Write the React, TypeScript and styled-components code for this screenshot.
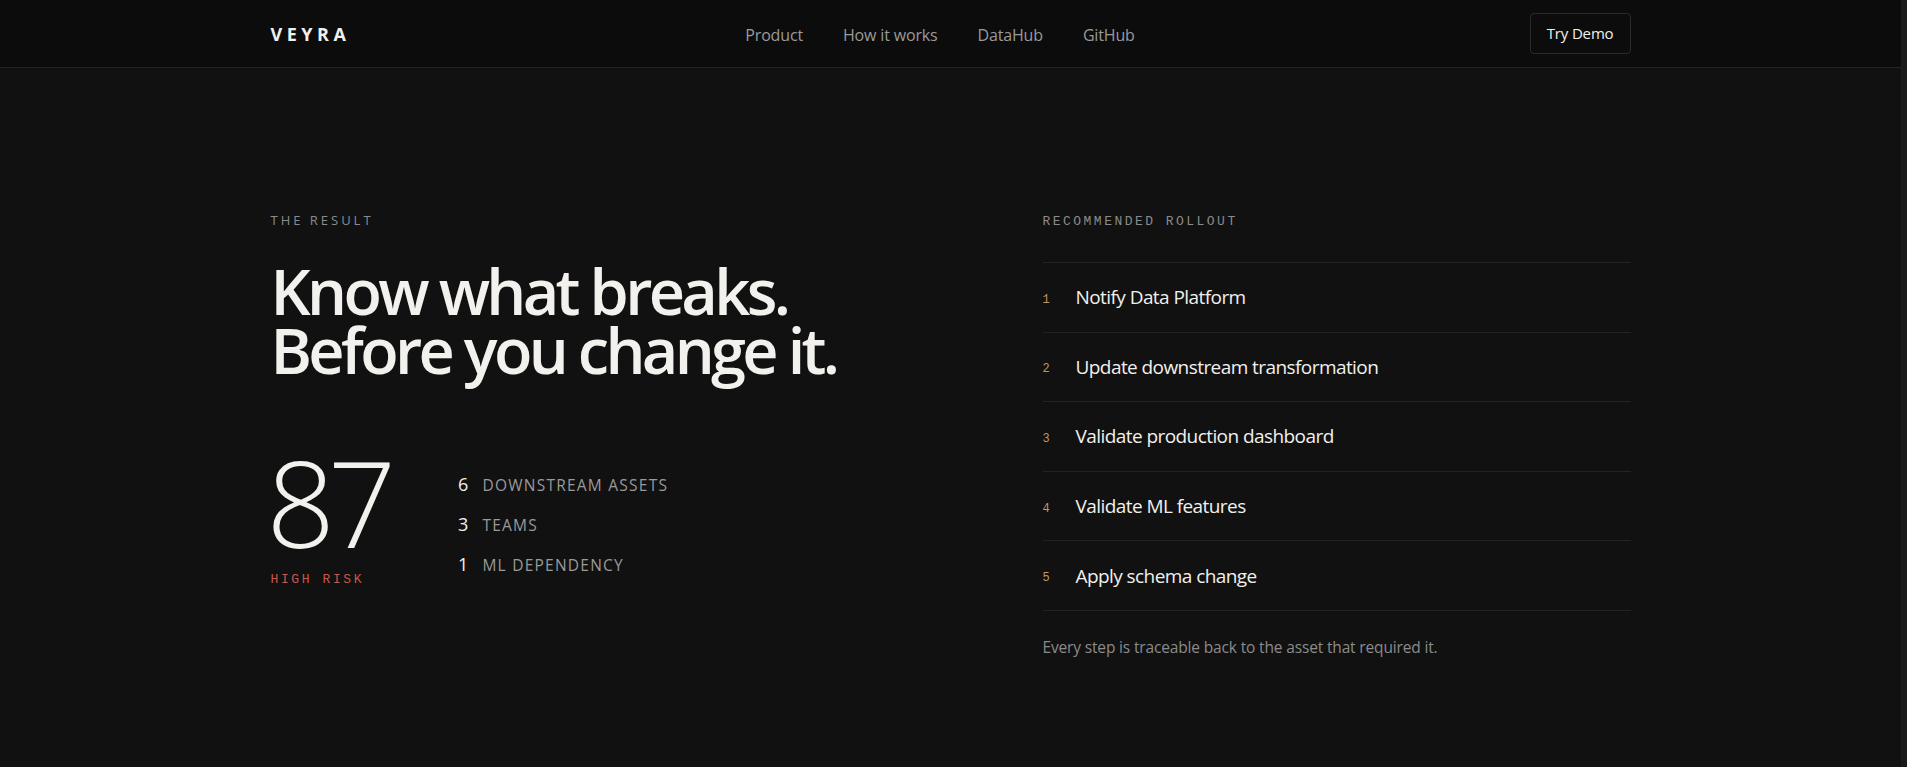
import styled, { createGlobalStyle } from 'styled-components';

const GlobalStyle = createGlobalStyle`
  html {
    background: #1a1a1a;
  }

  body {
    margin: 0 6px 0 0;
    background: #111111;
    color: #f1f0ec;
    font-family: "Open Sans", "Noto Sans", sans-serif;
    -webkit-font-smoothing: antialiased;
  }

  * {
    box-sizing: border-box;
  }
`;

const mono = `"Liberation Mono", "DejaVu Sans Mono", monospace`;

const Page = styled.div`
  min-height: 1400px;
`;

const Header = styled.header`
  background: #0c0c0c;
  border-bottom: 1px solid #232323;
`;

const HeaderInner = styled.div`
  max-width: 1360px;
  height: 67px;
  margin: 0 auto;
  display: flex;
  align-items: center;
  justify-content: space-between;
`;

const Logo = styled.div`
  font-size: 18px;
  font-weight: 700;
  letter-spacing: 0.25em;
  color: #f1f0ec;
`;

const Nav = styled.nav`
  display: flex;
  gap: 40px;
  padding-top: 2px;

  a {
    color: #9a9a9a;
    text-decoration: none;
    font-size: 16px;
    letter-spacing: -0.01em;
  }
`;

const DemoButton = styled.button`
  height: 41px;
  margin-top: -1px;
  padding: 0 16px;
  background: transparent;
  border: 1px solid #2b2b2b;
  border-radius: 4px;
  color: #f1f0ec;
  font-family: inherit;
  font-size: 15px;
  letter-spacing: -0.01em;
  cursor: pointer;
`;

const Main = styled.main`
  max-width: 1360px;
  margin: 0 auto;
  padding-top: 145px;
  display: grid;
  grid-template-columns: minmax(0, 1fr) 588px;
`;

const Column = styled.section`
  display: flex;
  flex-direction: column;
`;

const Eyebrow = styled.div<{ $mono?: boolean }>`
  font-family: ${(p) => (p.$mono ? mono : 'inherit')};
  font-size: 13px;
  line-height: 18px;
  letter-spacing: ${(p) => (p.$mono ? '0.19em' : '0.23em')};
  color: #8b8b8b;
  text-transform: uppercase;
  margin-top: ${(p) => (p.$mono ? '0' : '-2px')};
`;

const Headline = styled.h1`
  margin: 32px 0 0;
  font-size: 63px;
  line-height: 59px;
  font-weight: 600;
  letter-spacing: -0.058em;
  color: #f2f1ed;
`;

const ScoreRow = styled.div`
  margin-top: 68px;
  display: flex;
  align-items: center;
  gap: 69px;
`;

const Score = styled.div`
  display: flex;
  flex-direction: column;
`;

const ScoreValue = styled.div`
  font-size: 120px;
  line-height: 110px;
  font-weight: 300;
  letter-spacing: -0.06em;
  color: #f2f1ed;
  margin-left: -4px;
`;

const RiskLabel = styled.div`
  margin-top: 15px;
  font-family: ${mono};
  font-size: 13px;
  letter-spacing: 0.2em;
  color: #c8574f;
`;

const Stats = styled.ul`
  list-style: none;
  margin: 0;
  padding: 13px 0 0;
  display: flex;
  flex-direction: column;
  gap: 16px;
`;

const Stat = styled.li`
  display: flex;
  align-items: baseline;
  gap: 14px;
  height: 24px;
  line-height: 24px;
`;

const StatNum = styled.span`
  font-size: 18px;
  color: #f1f0ec;
`;

const StatLabel = styled.span`
  font-size: 15.5px;
  letter-spacing: 0.08em;
  color: #9a9a9a;
  text-transform: uppercase;
`;

const Steps = styled.ol`
  list-style: none;
  margin: 31px 0 0;
  padding: 0;
  border-top: 1px solid #232323;
`;

const Step = styled.li`
  height: 69.6px;
  display: flex;
  align-items: center;
  border-bottom: 1px solid #232323;
`;

const StepNum = styled.span`
  width: 33px;
  padding-top: 5px;
  font-family: ${mono};
  font-size: 12px;
  color: #bd9866;
`;

const StepText = styled.span`
  font-size: 19px;
  letter-spacing: -0.03em;
  color: #f1f0ec;
`;

const Footnote = styled.p`
  margin: 25px 0 0;
  font-size: 15.5px;
  letter-spacing: -0.01em;
  color: #8b8b8b;
`;

const stats = [
  { n: 6, label: 'Downstream assets' },
  { n: 3, label: 'Teams' },
  { n: 1, label: 'ML dependency' },
];

const steps = [
  'Notify Data Platform',
  'Update downstream transformation',
  'Validate production dashboard',
  'Validate ML features',
  'Apply schema change',
];

const App = () => {
  return (
    <Page>
      <GlobalStyle />
      <Header>
        <HeaderInner>
          <Logo>VEYRA</Logo>
          <Nav>
            <a href="#product">Product</a>
            <a href="#how">How it works</a>
            <a href="#datahub">DataHub</a>
            <a href="#github">GitHub</a>
          </Nav>
          <DemoButton>Try Demo</DemoButton>
        </HeaderInner>
      </Header>
      <Main>
        <Column>
          <Eyebrow>The result</Eyebrow>
          <Headline>
            Know what breaks.
            <br />
            Before you change it.
          </Headline>
          <ScoreRow>
            <Score>
              <ScoreValue>87</ScoreValue>
              <RiskLabel>HIGH RISK</RiskLabel>
            </Score>
            <Stats>
              {stats.map((s) => (
                <Stat key={s.label}>
                  <StatNum>{s.n}</StatNum>
                  <StatLabel>{s.label}</StatLabel>
                </Stat>
              ))}
            </Stats>
          </ScoreRow>
        </Column>
        <Column>
          <Eyebrow $mono>Recommended rollout</Eyebrow>
          <Steps>
            {steps.map((s, i) => (
              <Step key={s}>
                <StepNum>{i + 1}</StepNum>
                <StepText>{s}</StepText>
              </Step>
            ))}
          </Steps>
          <Footnote>Every step is traceable back to the asset that required it.</Footnote>
        </Column>
      </Main>
    </Page>
  );
};

export default App;
